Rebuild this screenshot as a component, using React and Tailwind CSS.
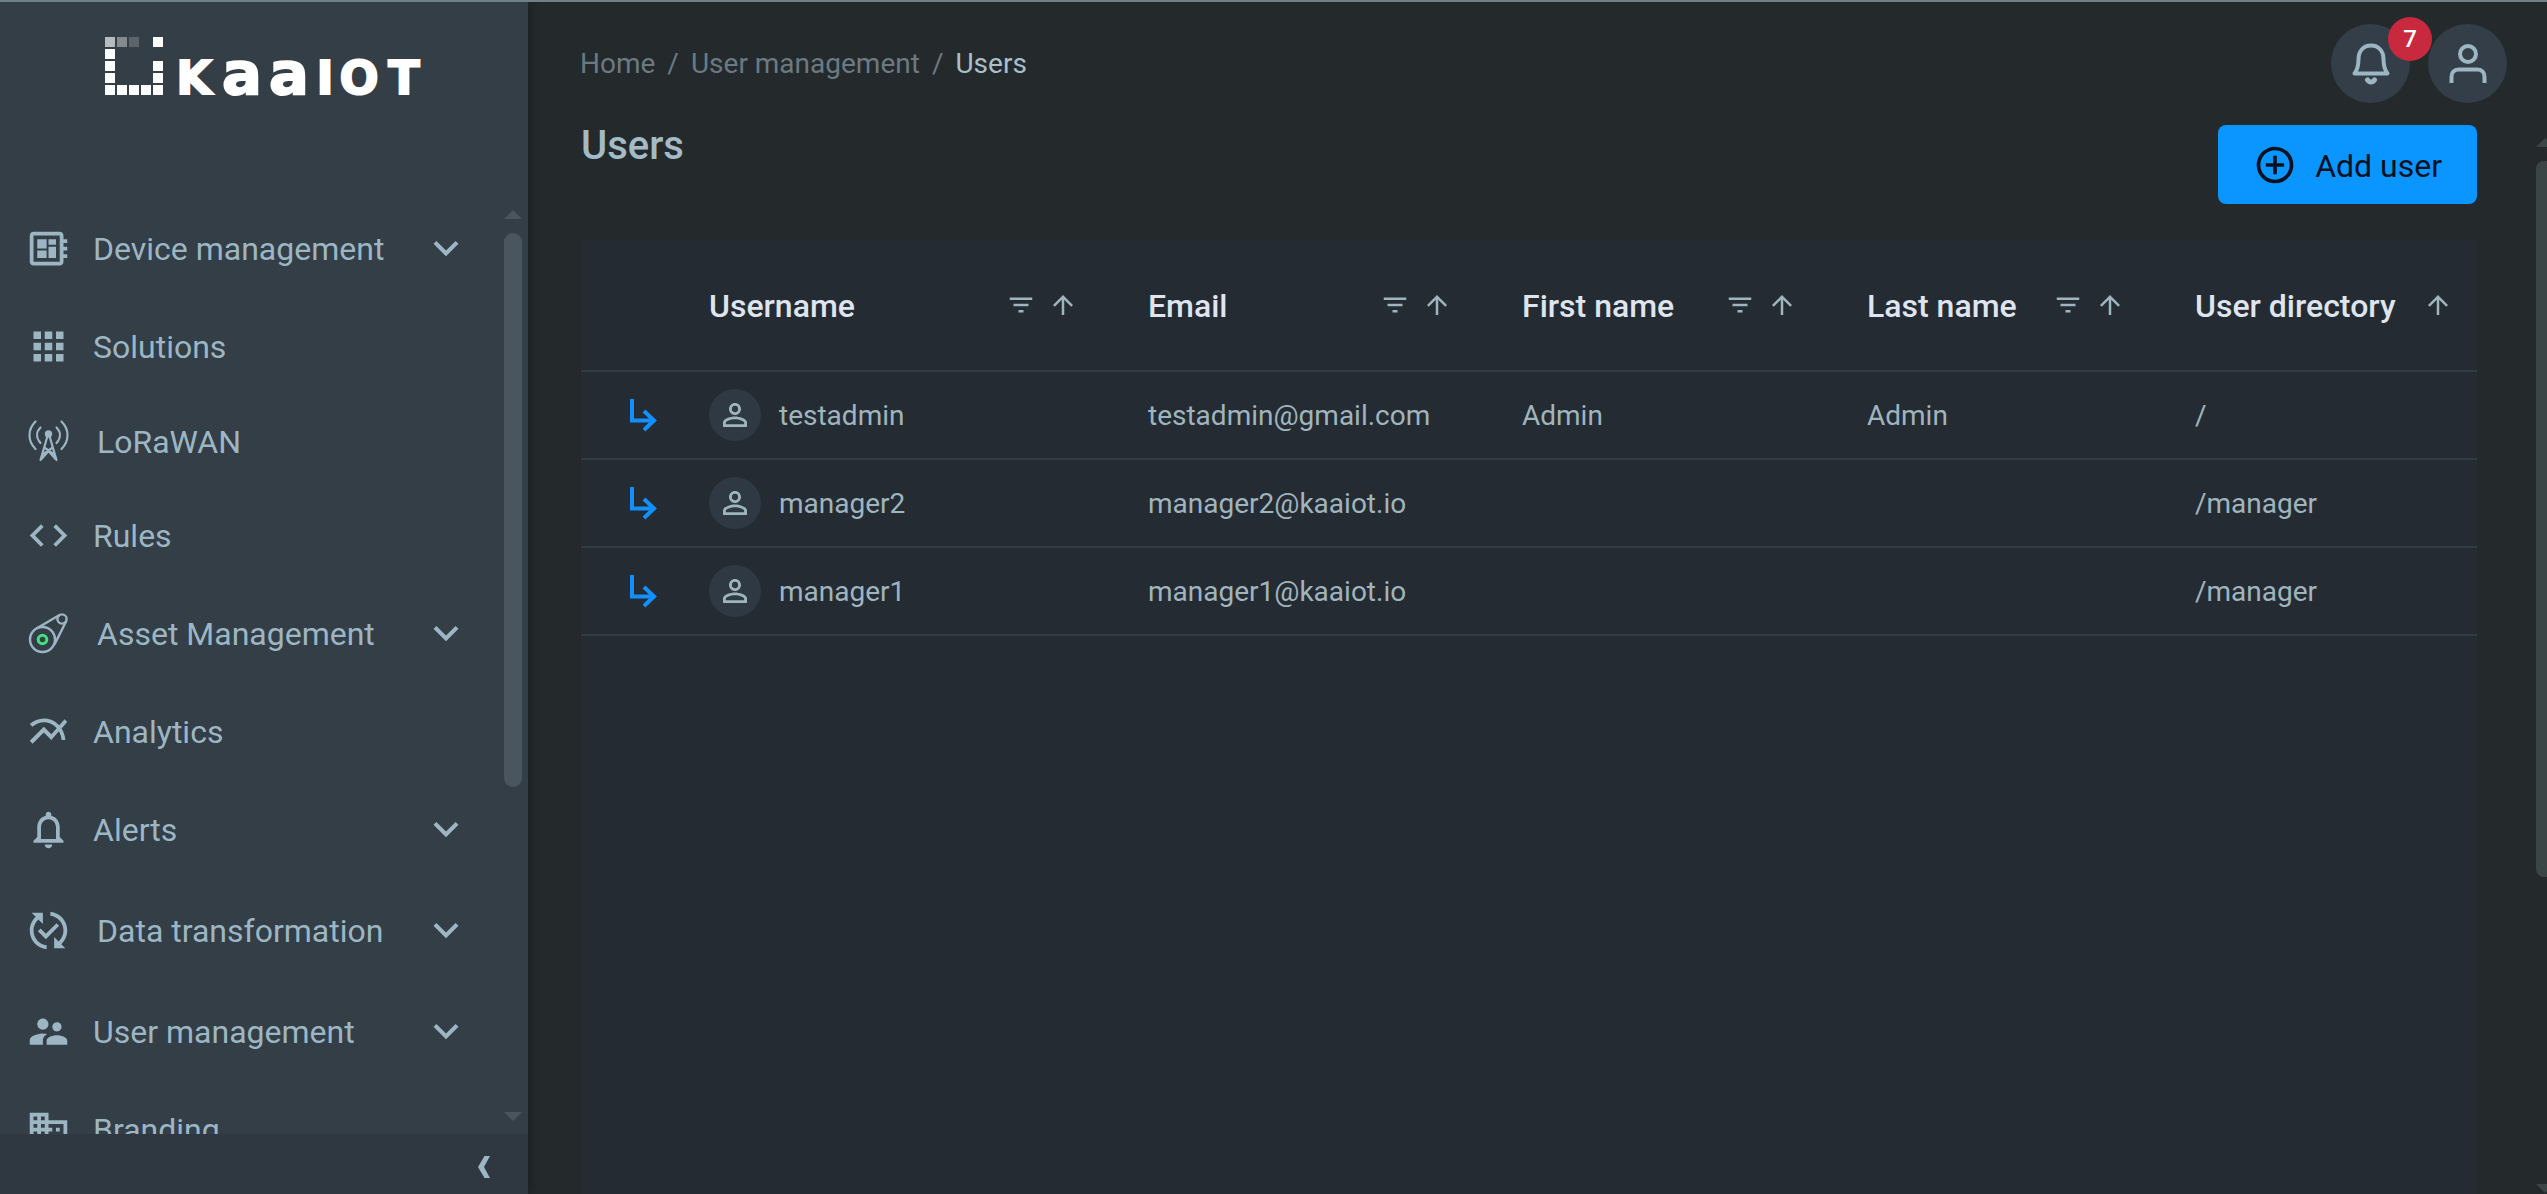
import React, { useState } from 'react';
import {
  MdAddCircleOutline,
  MdApps,
  MdArrowUpward,
  MdBusiness,
  MdCode,
  MdDeveloperBoard,
  MdExpandMore,
  MdFilterList,
  MdMultilineChart,
  MdNotificationsNone,
  MdPersonOutline,
  MdPublishedWithChanges,
  MdSupervisorAccount,
} from 'react-icons/md';
import clsx from 'clsx';

const TowerIcon = ({ className }) => (
  <svg viewBox="0 0 45 45" fill="none" stroke="currentColor" strokeWidth="2.200" strokeLinecap="round" className={className}>
    <path d="M9.500 3.500C1.500 11.500 1.500 23 9.500 31M35.500 3.500C43.500 11.500 43.500 23 35.500 31" />
    <path d="M14.500 9.500C10 14 10 20 14.500 25M30.500 9.500C35 14 35 20 30.500 25" />
    <path d="M21.500 18L14.500 42M23.500 18L30.500 42M19 30L27.500 36M26 30L17.500 36M15.500 41L22.500 33L29.500 41" />
    <circle cx="22.500" cy="16" r="3.700" fill="currentColor" stroke="none" />
  </svg>
);

const BeltIcon = ({ className }) => (
  <svg viewBox="0 0 45 45" fill="none" stroke="currentColor" strokeWidth="2.400" className={className}>
    <circle cx="16.500" cy="28.500" r="12.500" />
    <circle cx="36" cy="8" r="4.600" />
    <path d="M10.500 17.500L33.500 4M40.300 10L28.500 33.500" />
    <circle cx="16.500" cy="28.500" r="4.300" stroke="#3fe07f" strokeWidth="3" />
  </svg>
);

const BellIcon = () => (
  <svg viewBox="0 0 44 44" fill="none" stroke="currentColor" strokeWidth="4" className="size-11">
    <path d="M5.500 31.500C9 27 9.500 22 9.500 17C9.500 9 14.500 3.500 22 3.500S34.500 9 34.500 17C34.500 22 35 27 38.500 31.500Z" strokeLinejoin="round" />
    <path d="M18.500 38C20 40.500 24 40.500 25.500 38" strokeWidth="5" strokeLinecap="round" />
  </svg>
);

const UserIcon = () => (
  <svg viewBox="0 0 44 44" fill="none" stroke="currentColor" strokeWidth="4" className="size-11">
    <circle cx="22" cy="12" r="8" />
    <path d="M5.500 41V35C5.500 30.500 8 27.500 12.500 27.500H31.500C36 27.500 38.500 30.500 38.500 35V41" />
  </svg>
);

const OpenIcon = () => (
  <svg viewBox="0 0 28 34" fill="none" stroke="currentColor" strokeWidth="4" className="h-[34px] w-7">
    <path d="M3 1V22.500H25M15 13L25 22.500L15 32" />
  </svg>
);

const Logo = () => (
  <svg viewBox="0 0 320 80" fill="#fff" className="h-20 w-80 overflow-visible" role="img" aria-label="KaaIoT">
    <path d="M0 0h10v10H0z" opacity=".65" />
    <path d="M12 0h10v10H12z" opacity=".4" />
    <path d="M24 0h10v10H24z" opacity=".2" />
    <path d="M48 0h10v10H48zM0 12h10v10H0zM0 24h10v10H0zM48 24h10v10H48zM0 36h10v10H0zM48 36h10v10H48zM0 48h10v10H0zM12 48h10v10H12zM24 48h10v10H24zM36 48h10v10H36zM48 48h10v10H48z" />
    <g className="font-['DejaVu_Sans',sans-serif] font-bold" fontSize="46" textAnchor="middle" stroke="#fff" strokeWidth="2">
      <text x="89" y="57">K</text>
      <text x="137 184" y="57" fontSize="59">aa</text>
      <text x="220 254 299" y="57">IOT</text>
    </g>
  </svg>
);

const NAV = [
  { label: 'Device management', icon: MdDeveloperBoard, expandable: true },
  { label: 'Solutions', icon: MdApps },
  { label: 'LoRaWAN', icon: TowerIcon, height: 'h-[91px]', custom: true },
  { label: 'Rules', icon: MdCode },
  { label: 'Asset Management', icon: BeltIcon, expandable: true, custom: true },
  { label: 'Analytics', icon: MdMultilineChart },
  { label: 'Alerts', icon: MdNotificationsNone, expandable: true },
  { label: 'Data transformation', icon: MdPublishedWithChanges, height: 'h-[104px]', expandable: true, custom: true },
  { label: 'User management', icon: MdSupervisorAccount, expandable: true },
  { label: 'Branding', icon: MdBusiness },
];

const COLUMNS = [
  { key: 'username', label: 'Username', width: 'w-[439px]', filter: true },
  { key: 'email', label: 'Email', width: 'w-[374px]', filter: true },
  { key: 'firstName', label: 'First name', width: 'w-[345px]', filter: true },
  { key: 'lastName', label: 'Last name', width: 'w-[328px]', filter: true },
  { key: 'directory', label: 'User directory', width: 'w-[328px]' },
];

const USERS = [
  { username: 'testadmin', email: 'testadmin@gmail.com', firstName: 'Admin', lastName: 'Admin', directory: '/' },
  { username: 'manager2', email: 'manager2@kaaiot.io', directory: '/manager' },
  { username: 'manager1', email: 'manager1@kaaiot.io', directory: '/manager' },
];

const Arrow = ({ down }) => (
  <svg viewBox="0 0 18 10" fill="currentColor" className="h-[10px] w-[18px] shrink-0">
    <path d={down ? 'M0 0H18L9 9Z' : 'M0 10H18L9 1Z'} />
  </svg>
);

const NavItem = ({ item }) => {
  const [open, setOpen] = useState(false);
  const Icon = item.icon;
  const className = clsx(
    'flex w-full shrink-0 items-center pl-[26px] pr-[33px] text-left',
    item.height || 'h-[98px]',
    item.custom ? 'gap-[26px]' : 'gap-[22px]'
  );
  const content = (
    <>
      <Icon className="size-[45px] shrink-0" />
      <span className="flex-1 whitespace-nowrap pt-0.5">{item.label}</span>
      {item.expandable && <MdExpandMore className="size-[50px] shrink-0" />}
    </>
  );

  return (
    <li>
      {item.expandable ? (
        <button type="button" className={className} aria-expanded={open} onClick={() => setOpen(!open)}>
          {content}
        </button>
      ) : (
        <a href="#" className={className}>
          {content}
        </a>
      )}
    </li>
  );
};

const Sidebar = () => (
  <aside className="z-10 flex w-[528px] shrink-0 flex-col bg-[#333e47] text-[#9cb6c3] shadow-[4px_0_8px_rgba(0,0,0,0.2)]">
    <a href="#" className="flex h-[197px] shrink-0 items-start pl-[105px] pt-[35px]">
      <Logo />
    </a>
    <div className="flex min-h-0 flex-1">
      <nav className="min-w-0 flex-1 overflow-hidden text-[32px] leading-10">
        <ul>
          {NAV.map((item) => (
            <NavItem key={item.label} item={item} />
          ))}
        </ul>
      </nav>
      <div className="mr-[6px] flex w-[18px] flex-col pt-[10px] pb-3 text-[#4a565f]">
        <Arrow />
        <div className="min-h-0 flex-1 py-[14px]">
          <div className="h-[64%] rounded-full bg-[#4a565f]" />
        </div>
        <Arrow down />
      </div>
    </div>
    <div className="flex h-[60px] shrink-0 justify-end bg-[#2f3841] pr-8 pt-[6px]">
      <button type="button" aria-label="Collapse menu" className="flex w-6 items-center justify-center">
        <svg viewBox="0 0 12 22" fill="currentColor" className="h-[22px] w-3">
          <path d="M6.500 0H12L6 11L12 22H6.500L0 11Z" />
        </svg>
      </button>
    </div>
  </aside>
);

const TopBar = () => (
  <header className="flex h-[123px] shrink-0 items-start justify-between pl-[52px] pr-10 pt-[22px]">
    <nav aria-label="Breadcrumb" className="flex h-[79px] items-center gap-3 text-[28px] leading-8 text-[#6b7a82]">
      <a href="#">Home</a>
      <span>/</span>
      <a href="#">User management</a>
      <span>/</span>
      <span className="text-[#a9c0ca]">Users</span>
    </nav>
    <div className="flex gap-[18px] text-[#9cb6c3]">
      <button
        type="button"
        aria-label="Notifications"
        className="relative flex size-[79px] items-center justify-center rounded-full bg-[#333e48]"
      >
        <BellIcon />
        <span className="absolute -right-[22px] -top-[7px] flex size-11 items-center justify-center rounded-full bg-[#c9293f] text-2xl font-medium text-white">
          7
        </span>
      </button>
      <button
        type="button"
        aria-label="Account"
        className="flex size-[79px] items-center justify-center rounded-full bg-[#333e48]"
      >
        <UserIcon />
      </button>
    </div>
  </header>
);

const UsersTable = () => (
  <table className="w-full table-fixed border-separate border-spacing-0 text-left">
    <colgroup>
      <col className="w-[82px]" />
      {COLUMNS.map((col) => (
        <col key={col.key} className={col.width} />
      ))}
    </colgroup>
    <thead>
      <tr className="h-[132px] *:border-b-2 *:border-[#333b43]">
        <td />
        {COLUMNS.map((col) => (
          <th key={col.key} scope="col" className="pl-[46px] pr-6 font-medium">
            <div className="flex items-center justify-between">
              <span className="whitespace-nowrap pt-0.5 text-[32px] leading-10 text-[#dfe5ee]">{col.label}</span>
              <span className="flex gap-3">
                {col.filter && (
                  <button type="button" aria-label={`Filter by ${col.label}`}>
                    <MdFilterList className="size-[30px]" />
                  </button>
                )}
                <button type="button" aria-label={`Sort by ${col.label}`}>
                  <MdArrowUpward className="size-[30px]" />
                </button>
              </span>
            </div>
          </th>
        ))}
      </tr>
    </thead>
    <tbody className="text-[28px] leading-8">
      {USERS.map((user) => (
        <tr key={user.username} className="h-[88px] *:border-b-2 *:border-[#333b43]">
          <td className="pl-12">
            <a href="#" aria-label={`Open ${user.username}`} className="block text-[#1190ff]">
              <OpenIcon />
            </a>
          </td>
          <td className="pl-[46px]">
            <div className="flex items-center gap-[18px]">
              <span className="flex size-[52px] items-center justify-center rounded-full bg-[#2f3943]">
                <MdPersonOutline className="size-9" />
              </span>
              <span className="pt-0.5">{user.username}</span>
            </div>
          </td>
          <td className="pl-[46px] pt-0.5">{user.email}</td>
          <td className="pl-[46px] pt-0.5">{user.firstName}</td>
          <td className="pl-[46px] pt-0.5">{user.lastName}</td>
          <td className="pl-[46px] pt-0.5">{user.directory}</td>
        </tr>
      ))}
    </tbody>
  </table>
);

export default function App() {
  return (
    <div className="flex h-screen overflow-hidden border-t-2 border-[#6f8185] bg-[#24292c] font-['Roboto',sans-serif] text-[#9fb5be]">
      <Sidebar />
      <main className="flex min-w-0 flex-1 flex-col">
        <TopBar />
        <div className="flex min-h-0 flex-1">
          <div className="flex min-w-0 flex-1 flex-col gap-9 pl-[53px] pr-[59px]">
            <div className="flex items-start justify-between">
              <h1 className="text-[40px] font-medium leading-[42px] text-[#a3bbc6]">Users</h1>
              <button
                type="button"
                className="flex h-[79px] items-center gap-[18px] rounded-lg bg-[#0b95ff] px-[35px] text-[32px] leading-10 text-[#04121f]"
              >
                <MdAddCircleOutline className="size-11" />
                <span className="pt-0.5">Add user</span>
              </button>
            </div>
            <section className="min-h-0 flex-1 bg-[#252b33]">
              <UsersTable />
            </section>
          </div>
          <div className="flex w-[11px] flex-col overflow-hidden pt-3 text-[#3c4546]">
            <Arrow />
            <div className="min-h-0 flex-1 py-[14px]">
              <div className="h-[71%] w-[18px] rounded-lg bg-[#3c4546]" />
            </div>
            <Arrow down />
          </div>
        </div>
      </main>
    </div>
  );
}
